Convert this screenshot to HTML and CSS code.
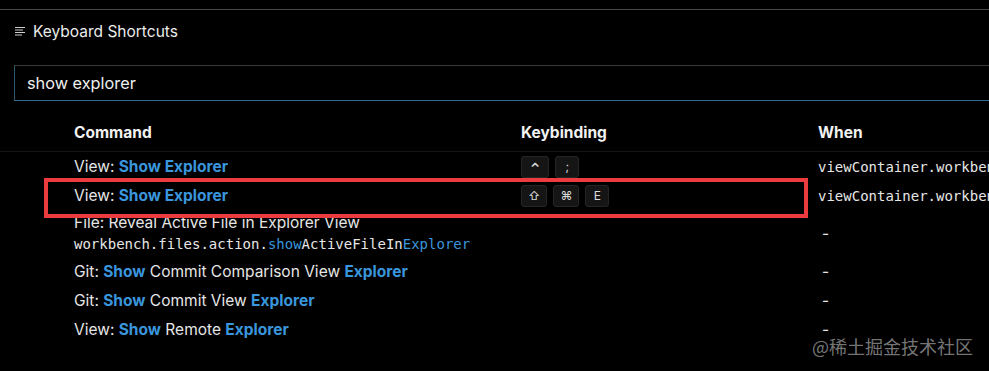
FILE: index.html
```html
<!DOCTYPE html>
<html lang="en">
<head>
  <meta charset="UTF-8">
  <title>Keyboard Shortcuts</title>
  <link rel="stylesheet" href="styles.css">
</head>
<body>
  <div class="topbar"></div>

  <div class="tab">
    <svg class="tab-icon" width="11" height="11" viewBox="0 0 11 11">
      <path d="M0 1.5h10M0 4h8M0 6.5h10M0 9h7" stroke="#d0d0d0" stroke-width="1.1"/>
    </svg>
    <span>Keyboard Shortcuts</span>
  </div>

  <div class="search">show explorer</div>

  <div class="table">
    <div class="row head">
      <div class="cmd">Command</div>
      <div class="keys">Keybinding</div>
      <div class="when">When</div>
    </div>

    <div class="row">
      <div class="cmd">View: <b>Show Explorer</b></div>
      <div class="keys"><kbd class="ctrl">⌃</kbd><kbd>;</kbd></div>
      <div class="when mono">viewContainer.workbench.view.explorer.enabled</div>
    </div>

    <div class="row">
      <div class="cmd">View: <b>Show Explorer</b></div>
      <div class="keys"><kbd>⇧</kbd><kbd>⌘</kbd><kbd>E</kbd></div>
      <div class="when mono">viewContainer.workbench.view.explorer.enabled</div>
    </div>

    <div class="row tall">
      <div class="cmd">
        <div>File: Reveal Active File in Explorer View</div>
        <div class="mono">workbench.files.action.<em>show</em>ActiveFileIn<em>Explorer</em></div>
      </div>
      <div class="keys"></div>
      <div class="when dash">-</div>
    </div>

    <div class="row">
      <div class="cmd">Git: <b>Show</b> Commit Comparison View <b>Explorer</b></div>
      <div class="keys"></div>
      <div class="when dash">-</div>
    </div>

    <div class="row">
      <div class="cmd">Git: <b>Show</b> Commit View <b>Explorer</b></div>
      <div class="keys"></div>
      <div class="when dash">-</div>
    </div>

    <div class="row">
      <div class="cmd">View: <b>Show</b> Remote <b>Explorer</b></div>
      <div class="keys"></div>
      <div class="when dash">-</div>
    </div>

    <div class="mark"></div>
  </div>

  <div class="watermark">@稀土掘金技术社区</div>
</body>
</html>
```

FILE: styles.css
```css
body {
  margin: 0;
  background-color: #000;
  color: #e6e6e6;
  font-family: Inter, "Noto Sans", sans-serif;
  font-size: 15.5px;
  overflow: hidden;
  height: 371px;
  position: relative;
}
.topbar {
  height: 9px;
  border-bottom: 1px solid #4a4a4a;
}
.tab {
  display: flex;
  align-items: center;
  gap: 7px;
  height: 42px;
  padding-left: 15px;
  color: #ececec;
  font-size: 15.5px;
}
.tab-icon {
  margin-top: 1px;
}
.search {
  margin: 13px 0 0 14px;
  box-sizing: border-box;
  height: 36px;
  border: 1px solid #3a3a3a;
  border-left-color: #2d5870;
  border-bottom-color: #2f6f8f;
  border-right: none;
  padding-left: 12px;
  line-height: 34px;
  font-size: 16.3px;
  color: #f0f0f0;
}
.table {
  position: relative;
  margin-top: 15px;
}
.row {
  display: grid;
  grid-template-columns: 447px 297px 1fr;
  padding-left: 74px;
  height: 29px;
  align-items: center;
  white-space: nowrap;
}
.row.head {
  font-weight: 700;
  color: #f2f2f2;
  border-bottom: 1px solid #141414;
  height: 33px;
  padding-bottom: 2px;
}
.row.tall {
  height: 47px;
}
.tall .cmd {
  display: flex;
  flex-direction: column;
  gap: 1px;
  line-height: 20px;
}
.cmd b {
  color: #3a96dc;
  font-weight: 700;
}
.mono {
  font-family: "DejaVu Sans Mono", monospace;
  font-size: 14px;
  color: #e6e6e6;
}
.mono em {
  font-style: normal;
  color: #3a96dc;
}
.when {
  overflow: hidden;
}
.dash {
  padding-left: 4px;
}
.keys {
  display: flex;
  gap: 6px;
}
kbd {
  display: inline-block;
  min-width: 24px;
  height: 22px;
  box-sizing: border-box;
  padding: 0 6px;
  background-color: #151515;
  border: 1px solid #252525;
  border-radius: 3px;
  font-family: Inter, "DejaVu Sans", sans-serif;
  font-size: 12px;
  line-height: 20px;
  text-align: center;
  color: #dcdcdc;
}
kbd.ctrl {
  font-family: "DejaVu Sans", sans-serif;
  font-size: 17px;
  line-height: 24px;
}
.mark {
  position: absolute;
  left: 44px;
  top: 62px;
  width: 764px;
  height: 40px;
  box-sizing: border-box;
  border: 4px solid #ec3b3f;
}
.watermark {
  position: absolute;
  right: 16px;
  bottom: 16px;
  line-height: 1;
  font-family: "Noto Sans CJK SC", sans-serif;
  font-size: 18px;
  color: rgba(220, 220, 220, 0.55);
}
```
